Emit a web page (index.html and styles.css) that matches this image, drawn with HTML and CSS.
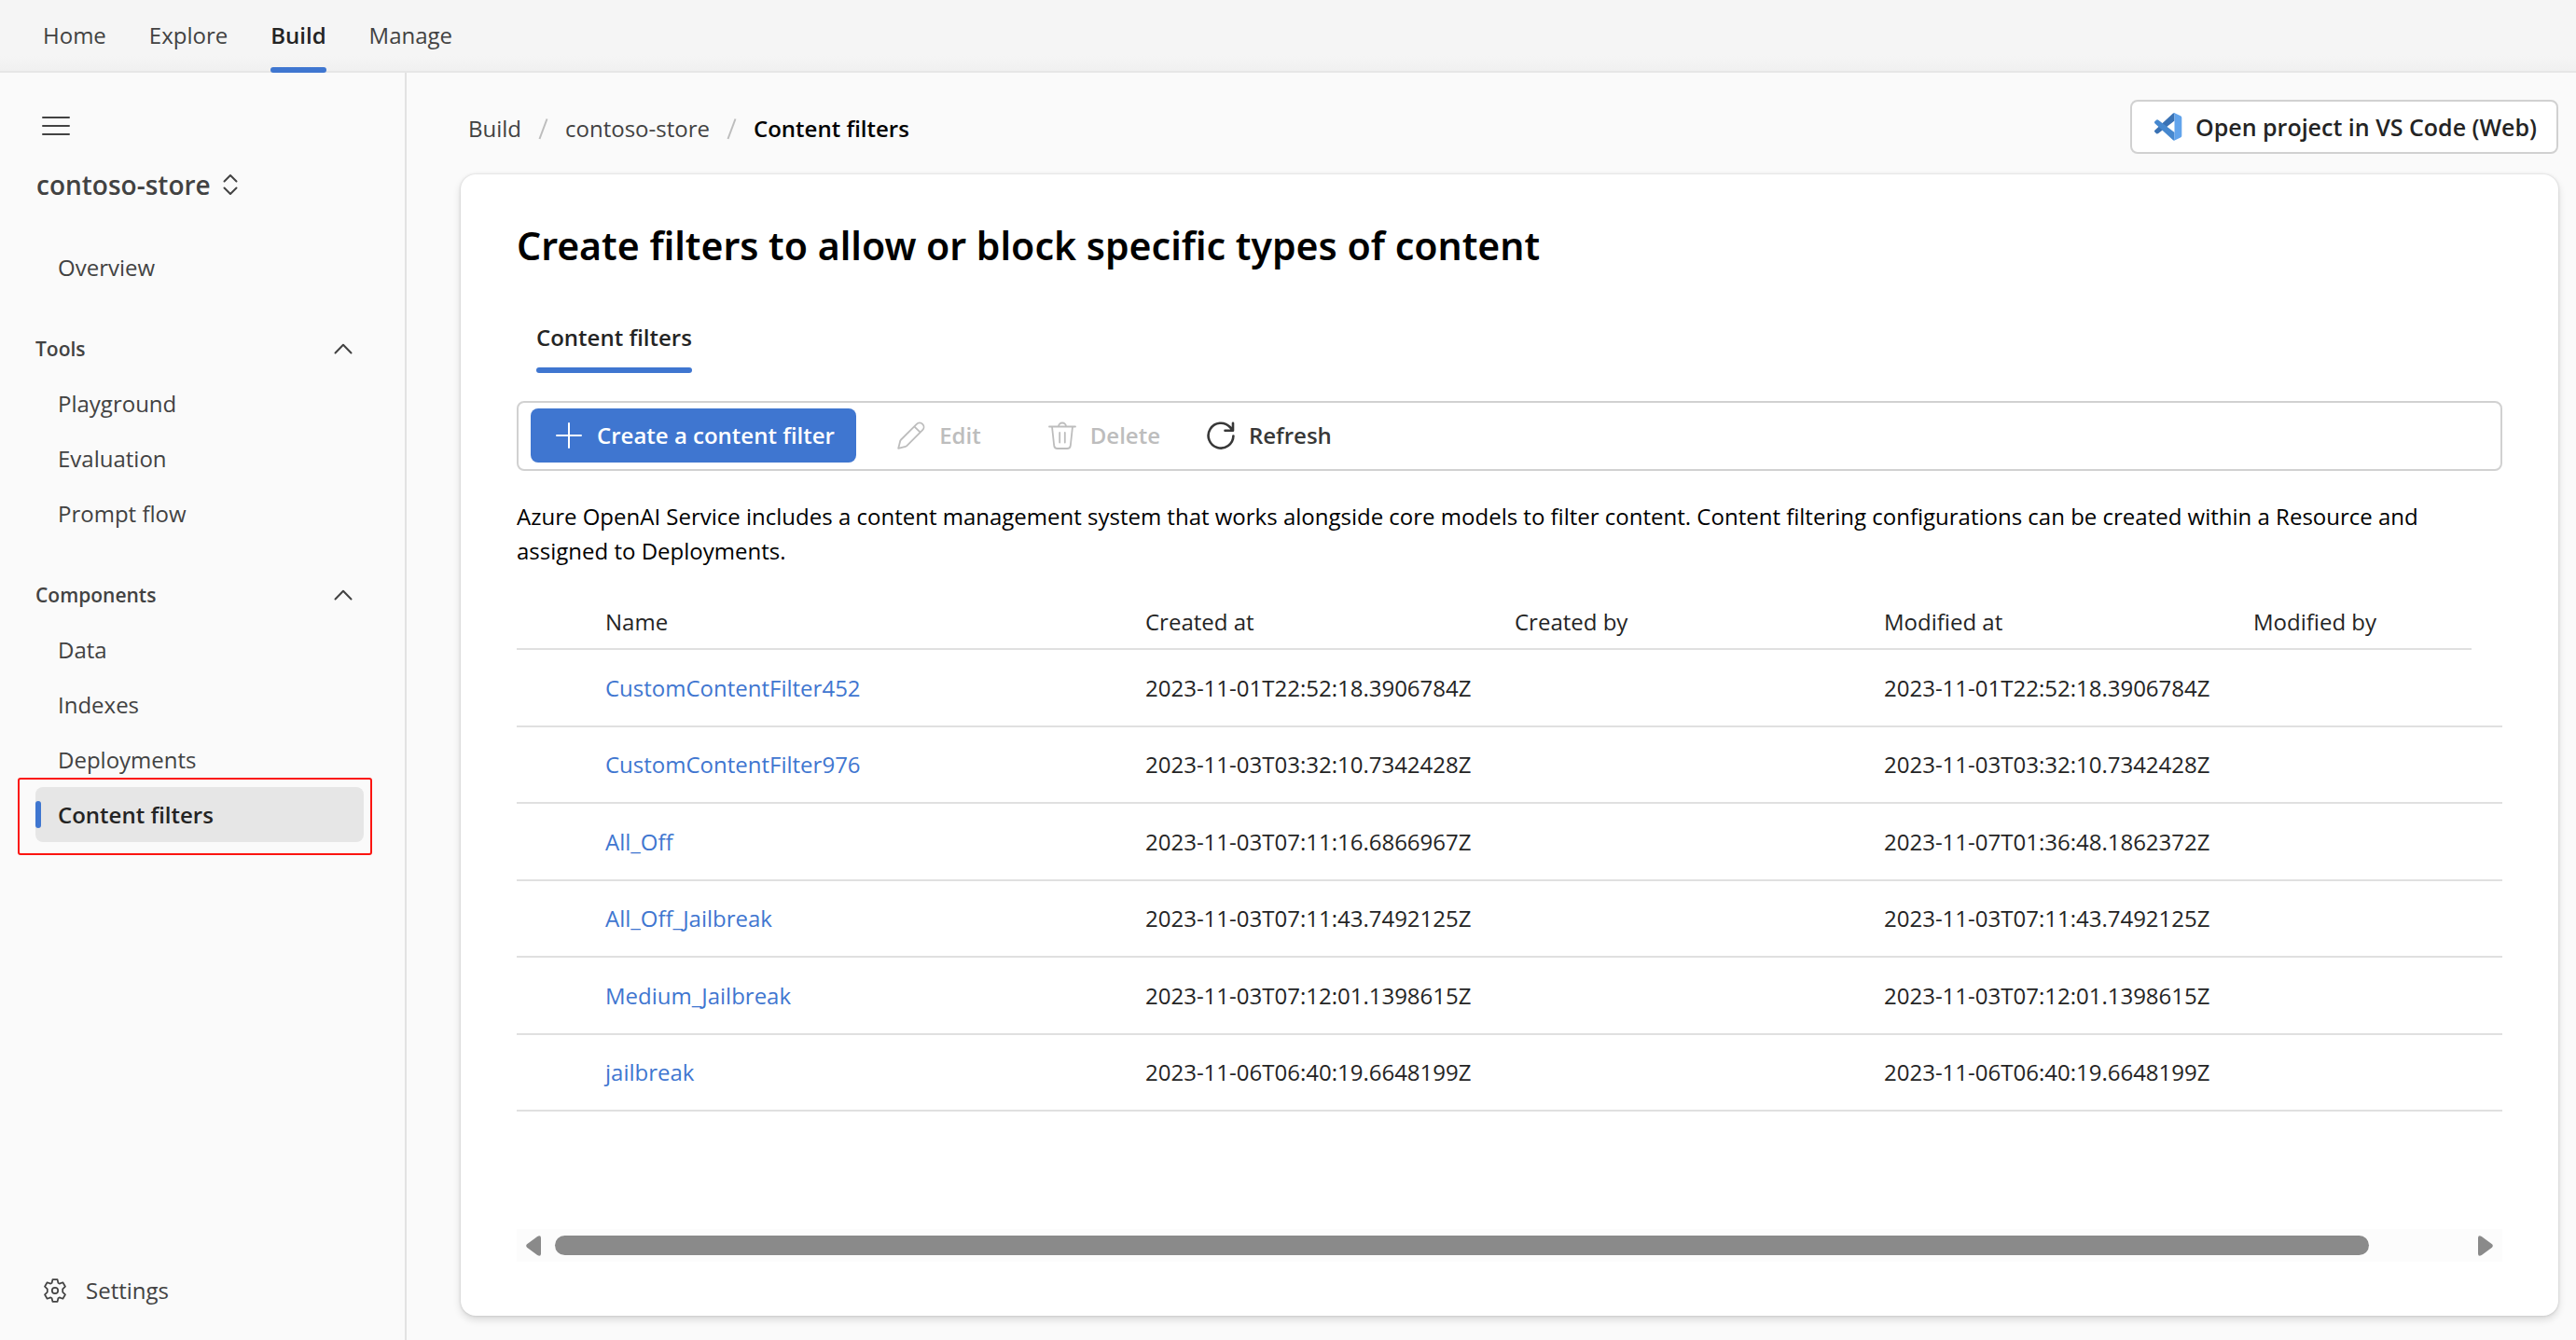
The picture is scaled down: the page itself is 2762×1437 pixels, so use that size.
FILE: index.html
```html
<!DOCTYPE html>
<html lang="en">
<head>
<meta charset="utf-8">
<title>Content filters</title>
<link rel="stylesheet" href="styles.css">
</head>
<body>
<header class="topbar">
  <nav class="topnav" aria-label="Primary">
    <a href="#">Home</a>
    <a href="#">Explore</a>
    <a href="#" class="current" aria-current="page">Build</a>
    <a href="#">Manage</a>
  </nav>
</header>
<div class="shell">
  <aside class="sidebar">
    <button class="menu-button" type="button" aria-label="Toggle navigation">
      <svg width="30" height="22" viewBox="0 0 30 22" fill="none" stroke="#424242" stroke-width="2" stroke-linecap="round"><path d="M1 2h28M1 11h28M1 20h28"/></svg>
    </button>
    <button class="switcher" type="button">
      contoso-store
      <svg width="16" height="24" viewBox="0 0 16 24" fill="none" stroke="#424242" stroke-width="2" stroke-linecap="round" stroke-linejoin="round"><path d="M1.500 8.500 8 2l6.500 6.500M1.500 15.500 8 22l6.500-6.500"/></svg>
    </button>
    <nav class="sidenav" aria-label="Project">
      <a class="item" href="#">Overview</a>
      <section class="group">
        <button class="group-header" type="button">Tools
          <svg width="20" height="12" viewBox="0 0 20 12" fill="none" stroke="#424242" stroke-width="2" stroke-linecap="round" stroke-linejoin="round"><path d="m1.500 10.500 8.500-8.700 8.500 8.700"/></svg>
        </button>
        <a class="item" href="#">Playground</a>
        <a class="item" href="#">Evaluation</a>
        <a class="item" href="#">Prompt flow</a>
      </section>
      <section class="group">
        <button class="group-header" type="button">Components
          <svg width="20" height="12" viewBox="0 0 20 12" fill="none" stroke="#424242" stroke-width="2" stroke-linecap="round" stroke-linejoin="round"><path d="m1.500 10.500 8.500-8.700 8.500 8.700"/></svg>
        </button>
        <a class="item" href="#">Data</a>
        <a class="item" href="#">Indexes</a>
        <a class="item" href="#">Deployments</a>
        <a class="item selected" href="#" aria-current="page">Content filters</a>
      </section>
    </nav>
    <a class="settings" href="#">
      <svg width="26" height="26" viewBox="0 0 26 26" fill="none" stroke="#424242" stroke-width="1.700" stroke-linejoin="round"><path d="M10.400 1.200h5.200l.8 3.600 1.300.8 3.700-1.300 2.600 4.400-2.800 2.700v3.200l2.800 2.700-2.600 4.400-3.700-1.300-1.300.8-.8 3.600h-5.200l-.8-3.600-1.300-.8-3.700 1.300L2 17.300l2.800-2.700v-3.200L2 8.700l2.600-4.400 3.700 1.300 1.300-.8z"/><circle cx="13" cy="13" r="3.200"/></svg>
      Settings
    </a>
  </aside>
  <main class="main">
    <div class="page-bar">
      <nav class="breadcrumb" aria-label="Breadcrumb">
        <a href="#">Build</a>
        <svg width="11" height="24" viewBox="0 0 11 24" fill="none" stroke="#bdbdbd" stroke-width="2"><path d="M1.500 23 9.500 1.500"/></svg>
        <a href="#">contoso-store</a>
        <svg width="11" height="24" viewBox="0 0 11 24" fill="none" stroke="#bdbdbd" stroke-width="2"><path d="M1.500 23 9.500 1.500"/></svg>
        <span class="here" aria-current="page">Content filters</span>
      </nav>
      <button class="vscode-button" type="button">
        <svg width="30" height="30" viewBox="0 0 30 30">
          <path fill="#3a72b4" d="M21.500 0 21.500 8.500 4.200 22a1.900 1.900 0 0 1-2.400-.1L.6 20.800a1.600 1.600 0 0 1 0-2.400L19.700.8z"/>
          <path fill="#4688cf" d="M21.500 29.500V21L4.200 7.800a1.900 1.900 0 0 0-2.400.1L.6 9a1.600 1.600 0 0 0 0 2.400l19.100 17.500z"/>
          <path fill="#62a4ec" d="M19.600 0.300Q20.500 0 21.700.3L28 3.200Q29.300 3.900 29.300 5.200v19.400q0 1.300-1.300 2l-6.300 2.900q-1.200.3-2.100-.2 1.900-.2 1.900-2.100V2.500q0-1.900-1.900-2.200z"/>
        </svg>
        Open project in VS Code (Web)
      </button>
    </div>
    <section class="card">
      <h1>Create filters to allow or block specific types of content</h1>
      <div class="tabs" role="tablist">
        <button class="tab" type="button" role="tab" aria-selected="true">Content filters</button>
      </div>
      <div class="toolbar" role="toolbar" aria-label="Filter actions">
        <button class="create" type="button">
          <svg width="30" height="30" viewBox="0 0 30 30" fill="none" stroke="#fff" stroke-width="2" stroke-linecap="round"><path d="M15 2v26M2 15h26"/></svg>
          Create a content filter
        </button>
        <button class="tool" type="button" disabled>
          <svg width="30" height="30" viewBox="0 0 30 30" fill="none" stroke="currentColor" stroke-width="1.800" stroke-linejoin="round"><path d="M20.800 2.800a4.500 4.500 0 0 1 6.400 6.400L10.500 25.900q-.7.700-1.600.9L1.200 28.800l2-7.700q.2-.9.900-1.600zM18.300 5.300l6.400 6.400"/></svg>
          Edit
        </button>
        <button class="tool" type="button" disabled>
          <svg width="30" height="30" viewBox="0 0 30 30" fill="none" stroke="currentColor" stroke-width="1.800" stroke-linecap="round"><path d="M1 5.500h28M11 5.500a4 4 0 0 1 8 0M4 5.500l2.200 20.300a3.600 3.600 0 0 0 3.600 3.200h10.400a3.600 3.600 0 0 0 3.600-3.200L26 5.500M12.200 12v10.500M17.800 12v10.500"/></svg>
          Delete
        </button>
        <button class="tool" type="button">
          <svg width="30" height="30" viewBox="0 0 30 30" fill="none" stroke="currentColor" stroke-width="2.600" stroke-linecap="round" stroke-linejoin="round"><path d="M28.400 15.500A13.400 13.400 0 1 1 24.800 6l2.800 3M28 1.800v8h-8.500"/></svg>
          Refresh
        </button>
      </div>
      <p class="intro">Azure OpenAI Service includes a content management system that works alongside core models to filter content. Content filtering configurations can be created within a Resource and assigned to Deployments.</p>
      <table class="filters">
        <colgroup><col class="c-select"><col class="c-name"><col class="c-data"><col class="c-data"><col class="c-data"><col><col class="c-end"></colgroup>
        <thead>
          <tr><td></td><th scope="col">Name</th><th scope="col">Created at</th><th scope="col">Created by</th><th scope="col">Modified at</th><th scope="col">Modified by</th><td class="end"></td></tr>
        </thead>
        <tbody>
          <tr><td></td><td><a href="#">CustomContentFilter452</a></td><td>2023-11-01T22:52:18.3906784Z</td><td></td><td>2023-11-01T22:52:18.3906784Z</td><td></td><td></td></tr>
          <tr><td></td><td><a href="#">CustomContentFilter976</a></td><td>2023-11-03T03:32:10.7342428Z</td><td></td><td>2023-11-03T03:32:10.7342428Z</td><td></td><td></td></tr>
          <tr><td></td><td><a href="#">All_Off</a></td><td>2023-11-03T07:11:16.6866967Z</td><td></td><td>2023-11-07T01:36:48.1862372Z</td><td></td><td></td></tr>
          <tr><td></td><td><a href="#">All_Off_Jailbreak</a></td><td>2023-11-03T07:11:43.7492125Z</td><td></td><td>2023-11-03T07:11:43.7492125Z</td><td></td><td></td></tr>
          <tr><td></td><td><a href="#">Medium_Jailbreak</a></td><td>2023-11-03T07:12:01.1398615Z</td><td></td><td>2023-11-03T07:12:01.1398615Z</td><td></td><td></td></tr>
          <tr><td></td><td><a href="#">jailbreak</a></td><td>2023-11-06T06:40:19.6648199Z</td><td></td><td>2023-11-06T06:40:19.6648199Z</td><td></td><td></td></tr>
        </tbody>
      </table>
      <div class="scrollbar">
        <button type="button" aria-label="Scroll left"><svg width="16" height="22" viewBox="0 0 16 22"><path d="M1 9.300 12.200.9Q16-.9 16 2.600v16.800q0 3.500-3.800 1.700L1 12.700Q-.6 11 1 9.300z" fill="#8a8a8a"/></svg></button>
        <div class="track"><div class="thumb"></div></div>
        <button type="button" aria-label="Scroll right"><svg width="16" height="22" viewBox="0 0 16 22"><path d="M15 9.300 3.800.9Q0-.9 0 2.600v16.800q0 3.500 3.800 1.700L15 12.700q1.600-1.700 0-3.400z" fill="#8a8a8a"/></svg></button>
      </div>
    </section>
  </main>
</div>
</body>
</html>
```
FILE: styles.css
```css
* { box-sizing: border-box; }

body {
  margin: 0;
  min-height: 100vh;
  display: flex;
  flex-direction: column;
  background: #fafafa;
  color: #242424;
  font: 400 24px/36px "Open Sans", "Noto Sans", sans-serif;
}

a { color: inherit; text-decoration: none; }

button {
  margin: 0;
  padding: 0;
  border: 0;
  background: none;
  color: inherit;
  font: inherit;
  cursor: pointer;
}

svg { display: block; flex: none; }

/* Top navigation */
.topbar {
  background: linear-gradient(#f5f5f5 60px, #f0f0f0);
  border-bottom: 2px solid #e6e6e6;
}

.topnav {
  display: flex;
  gap: 46px;
  padding-left: 46px;
  color: #424242;
}

.topnav a {
  position: relative;
  line-height: 76px;
}

.topnav .current { color: #242424; font-weight: 600; }

.topnav .current::after,
.tab::after {
  content: "";
  position: absolute;
  left: 0;
  right: 0;
  bottom: 0;
  height: 6px;
  border-radius: 3px;
  background: #3f76d0;
}

.topnav .current::after { bottom: -2px; }

.shell { flex: 1; display: flex; }

/* Side navigation */
.sidebar {
  flex: 0 0 436px;
  display: flex;
  flex-direction: column;
  align-items: stretch;
  padding: 42px 44px 24px 38px;
  border-right: 2px solid #e2e2e2;
  color: #424242;
}

.menu-button {
  align-self: flex-start;
  height: 30px;
  padding: 0 7px;
}

.switcher {
  align-self: flex-start;
  display: flex;
  align-items: center;
  gap: 13px;
  height: 40px;
  margin: 28px 0 39px 1px;
  font-size: 28px;
  font-weight: 600;
}

.sidenav { display: flex; flex-direction: column; gap: 29px; }

.group { display: flex; flex-direction: column; }

.group-header {
  display: flex;
  align-items: center;
  justify-content: space-between;
  height: 58px;
  padding-right: 12px;
  font-size: 21px;
  font-weight: 600;
}

.item {
  display: block;
  padding-left: 24px;
  line-height: 59px;
  border-radius: 8px;
}

.selected {
  position: relative;
  background: #e6e6e6;
  color: #242424;
  font-weight: 600;
}

.selected::before {
  content: "";
  position: absolute;
  left: 0;
  top: 15px;
  width: 6px;
  height: 29px;
  border-radius: 3px;
  background: #3f76d0;
}

/* Callout frame round the selected page */
.selected::after {
  content: "";
  position: absolute;
  inset: -10px -9px -14px -19px;
  border: 2px solid #fb1410;
  border-radius: 3px;
}

.settings {
  display: flex;
  align-items: center;
  gap: 20px;
  height: 59px;
  margin-top: auto;
  padding-left: 8px;
}

/* Main area */
.main {
  flex: 1;
  min-width: 0;
  display: flex;
  flex-direction: column;
  gap: 22px;
  padding: 29px 19px 26px 58px;
}

.page-bar { display: flex; align-items: center; justify-content: space-between; }

.breadcrumb {
  display: flex;
  align-items: center;
  gap: 18px;
  padding: 3px 0 0 8px;
  color: #424242;
}

.here { color: #000; font-weight: 600; }

.vscode-button {
  display: flex;
  align-items: center;
  gap: 14px;
  height: 58px;
  padding: 0 21px 0 24px;
  border: 2px solid #d1d1d1;
  border-radius: 8px;
  background: #fff;
  font-size: 25px;
  font-weight: 600;
}

.card {
  flex: 1;
  display: flex;
  flex-direction: column;
  padding: 48px 60px 58px;
  border-radius: 16px;
  background: #fff;
  box-shadow: 0 0 3px rgba(0, 0, 0, .16), 0 4px 8px rgba(0, 0, 0, .14);
}

h1 {
  margin: 0 0 41px;
  color: #000;
  font-family: "Noto Sans", "Open Sans", sans-serif;
  font-size: 41px;
  font-weight: 600;
  line-height: 56px;
}

.tabs { display: flex; padding-left: 21px; }

.tab {
  position: relative;
  padding-bottom: 8px;
  font-weight: 600;
  line-height: 60px;
}

.toolbar {
  display: flex;
  align-items: center;
  gap: 1px;
  margin: 30px 0;
  padding: 6px 13px 7px;
  border: 2px solid #d1d1d1;
  border-radius: 8px;
  font-weight: 600;
}

.create,
.tool {
  display: flex;
  align-items: center;
  justify-content: center;
  gap: 15px;
  height: 58px;
}

.create {
  padding: 0 23px 0 26px;
  border-radius: 8px;
  background: #3f76d0;
  color: #fff;
}

.tool { min-width: 176px; color: #383838; }

.tool:disabled { color: #bdbdbd; cursor: default; }

.intro { margin: 0 0 29px; color: #000; line-height: 37px; }

/* Filter list */
.filters {
  width: 100%;
  table-layout: fixed;
  border-collapse: separate;
  border-spacing: 0;
}

.c-select { width: 95px; }
.c-name { width: 579px; }
.c-data { width: 396px; }
.c-end { width: 33px; }

.filters th,
.filters td {
  height: 82px;
  padding: 0;
  border-bottom: 2px solid #e0e0e0;
  font-weight: 400;
  text-align: left;
  white-space: nowrap;
}

.filters thead th,
.filters thead td { height: 59px; }

.filters tbody tr:nth-child(odd) td { height: 83px; }

.filters .end { border-bottom: 0; }

.filters a { color: #3f76d0; }

/* Horizontal scroll bar */
.scrollbar {
  display: grid;
  grid-template-columns: 36px 1fr 36px;
  column-gap: 5px;
  align-items: center;
  height: 35px;
  margin-top: auto;
  background: #fcfcfc;
}

.scrollbar button { display: grid; place-items: center; }

.thumb {
  width: 95%;
  height: 21px;
  border-radius: 11px;
  background: #8a8a8a;
}
```
